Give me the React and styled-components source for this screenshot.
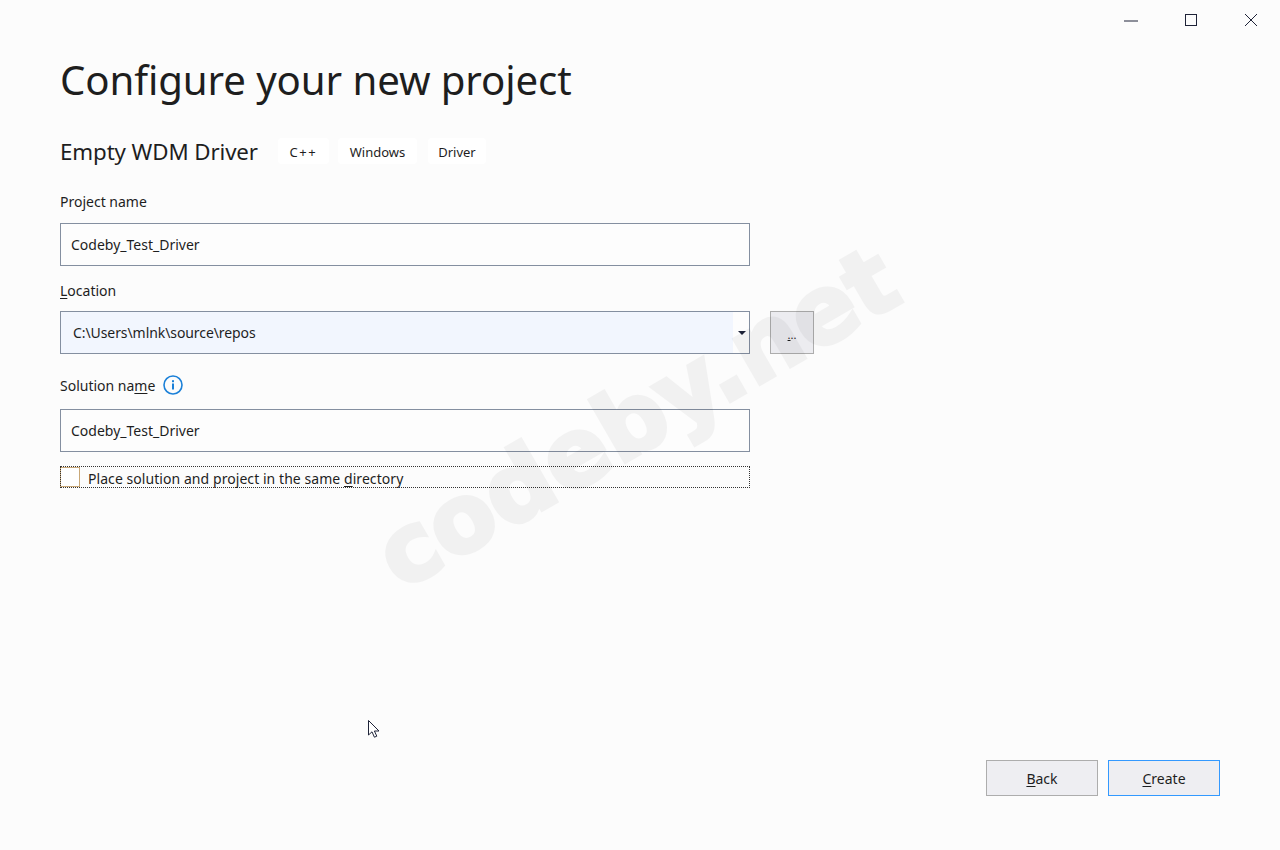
import React from 'react'
import styled, { createGlobalStyle } from 'styled-components'

const Global = createGlobalStyle`
  html, body { margin: 0; padding: 0; background: #fcfcfc; }
  body { font-family: "Noto Sans", "Open Sans", "Liberation Sans", sans-serif; color: #1e1e1e; }
`

const Page = styled.div`
  position: relative;
  width: 1280px;
  height: 850px;
  overflow: hidden;
  display: flex;
  flex-direction: column;
  background: #fcfcfc;
`

const TitleBar = styled.div`
  display: flex;
  justify-content: flex-end;
  height: 40px;
`

const WinButton = styled.div`
  box-sizing: border-box;
  width: 60px;
  height: 40px;
  padding-left: 2px;
  display: flex;
  align-items: center;
  justify-content: center;
`

const Content = styled.div`
  flex: 1;
  display: flex;
  flex-direction: column;
  padding: 0 60px 54px;
`

const Title = styled.h1`
  margin: 11px 0 0;
  font-size: 40.2px;
  line-height: 58px;
  font-weight: 400;
  color: #1e1e1e;
  letter-spacing: -0.1px;
`

const TemplateRow = styled.div`
  display: flex;
  align-items: center;
  height: 28px;
  margin-top: 28px;
`

const TemplateName = styled.div`
  font-size: 22.3px;
  line-height: 28px;
  padding-top: 1px;
  margin-right: 20px;
  letter-spacing: -0.1px;
`

const Tag = styled.span`
  box-sizing: border-box;
  display: flex;
  align-items: center;
  justify-content: center;
  width: ${p => p.$width}px;
  height: 26px;
  padding-top: 1px;
  margin-right: ${p => p.$gap}px;
  font-size: 13px;
  letter-spacing: ${p => p.$spacing || 0}px;
  color: #1e1e1e;
  background: #ffffff;
  border-radius: 4px;
`

const Label = styled.label`
  box-sizing: border-box;
  display: flex;
  align-items: center;
  font-size: 14px;
  line-height: 20px;
  height: 20px;
  margin-top: ${p => p.$top}px;
  margin-bottom: ${p => p.$bottom}px;
  color: #1e1e1e;
  span { position: relative; top: 1px; }
  u { text-underline-offset: 2px; }
`

const TextBox = styled.div`
  box-sizing: border-box;
  width: 690px;
  height: 43px;
  padding: 0 10px;
  display: flex;
  align-items: center;
  font-size: 14px;
  border: 1px solid #848fa0;
  background: #fdfdfd;
`

const LocationRow = styled.div`
  display: flex;
  gap: 20px;
`

const Combo = styled(TextBox)`
  padding: 0;
  align-items: stretch;
`

const ComboText = styled.div`
  flex: 1;
  display: flex;
  align-items: center;
  padding-left: 12px;
  letter-spacing: -0.08px;
  background: #f2f6fe;
`

const ComboArrow = styled.div`
  width: 16px;
  display: flex;
  align-items: center;
  justify-content: center;
  &::after {
    content: "";
    margin-left: 1px;
    border-left: 4px solid transparent;
    border-right: 4px solid transparent;
    border-top: 4px solid #1e2338;
  }
`

const Browse = styled.div`
  box-sizing: border-box;
  width: 44px;
  height: 43px;
  padding-top: 4px;
  display: flex;
  justify-content: center;
  align-items: center;
  font-size: 11px;
  line-height: 1;
  border: 1px solid #adadad;
  background: #ececf0;
  u { text-underline-offset: 1px; }
`

const CheckRow = styled.div`
  box-sizing: border-box;
  width: 690px;
  height: 22px;
  margin-top: 14px;
  display: flex;
  align-items: center;
  font-size: 14px;
  letter-spacing: 0.06px;
  outline: 1px dotted #333;
  outline-offset: -1px;
  u { text-underline-offset: 2px; }
`

const CheckText = styled.span`
  position: relative;
  top: 1px;
`

const CheckBox = styled.span`
  box-sizing: border-box;
  width: 20px;
  height: 20px;
  margin-right: 8px;
  background: #fff;
  border: 1px solid #c9a878;
`

const Footer = styled.div`
  margin-top: auto;
  display: flex;
  justify-content: flex-end;
  gap: 10px;
`

const Button = styled.button`
  box-sizing: border-box;
  width: 112px;
  height: 36px;
  padding: 0;
  font-family: inherit;
  font-size: 14px;
  color: #1e1e1e;
  background: #eeeef2;
  border: 1px solid ${p => (p.$primary ? '#3399ff' : '#adadad')};
  u { text-underline-offset: 2px; }
`

const Watermark = styled.div`
  position: absolute;
  left: 348px;
  top: 371px;
  width: 578px;
  display: flex;
  justify-content: center;
  font-family: "DejaVu Sans", sans-serif;
  font-size: 94px;
  line-height: 1;
  font-weight: 700;
  white-space: nowrap;
  color: #000;
  -webkit-text-stroke: 4px #000;
  opacity: 0.04;
  transform: rotate(-30deg);
  pointer-events: none;
`

const Cursor = styled.svg`
  position: absolute;
  left: 367px;
  top: 719px;
`

const InfoIcon = () => (
  <svg width="20" height="20" viewBox="0 0 20 20" style={{ marginLeft: 8 }}>
    <circle cx="10" cy="10" r="9" fill="none" stroke="#1b80d8" strokeWidth="1.6" />
    <rect x="9" y="8.5" width="2" height="6" fill="#1b80d8" />
    <rect x="9" y="5.2" width="2" height="2" fill="#1b80d8" />
  </svg>
)

export default function App() {
  return (
    <Page>
      <Global />
      <TitleBar>
        <WinButton>
          <svg width="16" height="16" viewBox="0 0 16 16"><path d="M1 9h14" stroke="#1e2338" fill="none" /></svg>
        </WinButton>
        <WinButton>
          <svg width="14" height="14" viewBox="0 0 14 14"><rect x="1.5" y="1.5" width="11" height="11" stroke="#1e2338" fill="none" /></svg>
        </WinButton>
        <WinButton>
          <svg width="14" height="14" viewBox="0 0 14 14"><path d="M1 1l12 12M13 1L1 13" stroke="#1e2338" fill="none" /></svg>
        </WinButton>
      </TitleBar>
      <Content>
        <Title>Configure your new project</Title>
        <TemplateRow>
          <TemplateName>Empty WDM Driver</TemplateName>
          <Tag $width={51} $gap={9} $spacing={1.6}>C++</Tag>
          <Tag $width={79} $gap={11}>Windows</Tag>
          <Tag $width={58} $gap={0}>Driver</Tag>
        </TemplateRow>
        <Label $top={26} $bottom={12}><span>Project name</span></Label>
        <TextBox>Codeby_Test_Driver</TextBox>
        <Label $top={14} $bottom={11}><span><u>L</u>ocation</span></Label>
        <LocationRow>
          <Combo>
            <ComboText>C:\Users\mlnk\source\repos</ComboText>
            <ComboArrow />
          </Combo>
          <Browse><u>.</u>..</Browse>
        </LocationRow>
        <Label $top={21} $bottom={14}>
          <span>Solution na<u>m</u>e</span>
          <InfoIcon />
        </Label>
        <TextBox>Codeby_Test_Driver</TextBox>
        <CheckRow>
          <CheckBox />
          <CheckText>Place solution and project in the same <u>d</u>irectory</CheckText>
        </CheckRow>
        <Footer>
          <Button><u>B</u>ack</Button>
          <Button $primary><u>C</u>reate</Button>
        </Footer>
      </Content>
      <Watermark>codeby.net</Watermark>
      <Cursor width="14" height="20" viewBox="0 0 14 20">
        <path d="M1.5 1.5v14.5l3.5-3.2 2.4 5.4 2.4-1-2.4-5.2h4.6z" fill="#fff" stroke="#1e2338" strokeWidth="1" />
      </Cursor>
    </Page>
  )
}
